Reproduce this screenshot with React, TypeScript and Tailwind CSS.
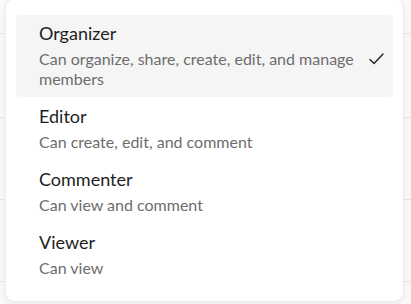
import React from "react";

const roles = [
  { title: "Organizer", desc: "Can organize, share, create, edit, and manage members", selected: true },
  { title: "Editor", desc: "Can create, edit, and comment" },
  { title: "Commenter", desc: "Can view and comment" },
  { title: "Viewer", desc: "Can view" },
];

export default function App() {
  return (
    <div className="relative w-[411px] h-[304px] overflow-hidden bg-[#f9f9f9]" style={{ fontFamily: "Lato, 'Open Sans', sans-serif" }}>
      <div className="flex flex-col">
        <div className="h-[34px] border-b border-[#e6e6e6]" />
        <div className="h-[84px] border-b border-[#e6e6e6]" />
        <div className="h-[82px] border-b border-[#e6e6e6]" />
        <div className="h-[82px] border-b border-[#e6e6e6]" />
      </div>
      <div className="absolute left-[5px] top-[-2px] w-[399px] h-[304px] rounded-[10px] bg-white border border-[#ececec] shadow-[0_2px_6px_rgba(0,0,0,0.06)] px-[10px] pt-[16px] flex flex-col gap-[1px]">
        {roles.map((r) => (
          <div
            key={r.title}
            className={`flex items-center rounded-[5px] pl-[23px] pr-[9px] pt-[6px] pb-[8px] ${r.selected ? "bg-[#f5f5f5]" : ""}`}
          >
            <div className="flex-1 flex flex-col gap-[4px] pr-[12px]">
              <div className="text-[18px] leading-[24px] text-[#1e1e1e]">{r.title}</div>
              <div className="text-[16px] leading-[20px] text-[#6d6d6d]">{r.desc}</div>
            </div>
            {r.selected && (
              <svg width="15" height="12" viewBox="0 0 15 12" className="mt-[7px]">
                <path d="M1 6.5 L5 10.5 L14 1" fill="none" stroke="#222" strokeWidth="1.4" strokeLinecap="round" strokeLinejoin="round" />
              </svg>
            )}
          </div>
        ))}
      </div>
    </div>
  );
}
